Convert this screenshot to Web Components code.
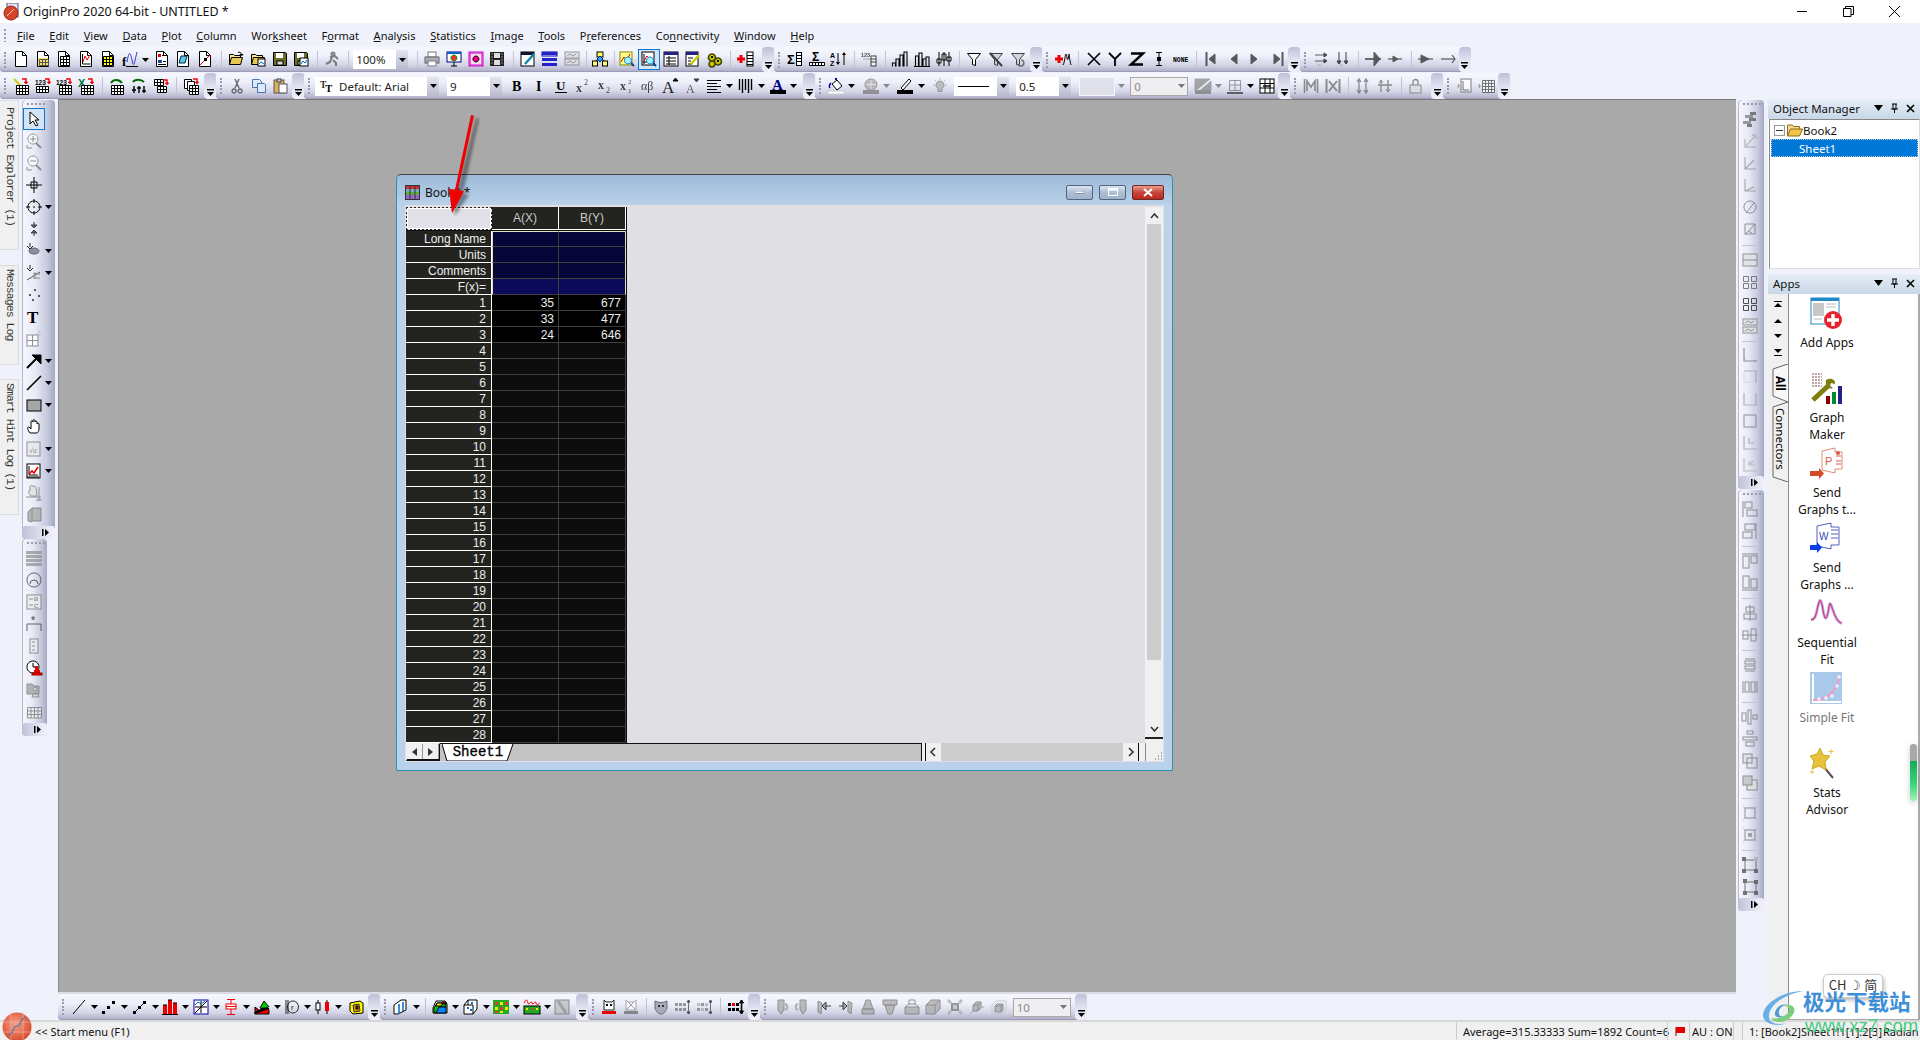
<!DOCTYPE html>
<html>
<head>
<meta charset="utf-8">
<title>OriginPro 2020</title>
<style>
    html, body { margin: 0; height: 100%; overflow: hidden; background: #eff2fb; }
</style>
</head>
<body>
<origin-app>
    <title-bar slot="title">OriginPro 2020 64-bit - UNTITLED *</title-bar>
    <menu-bar slot="menu"></menu-bar>

    <tool-row slot="bars">
        <tool-group w="774" items="new book wks gph ywk fx v rpt cyn crv | open open2 save save2 | run. | c~100%~55~n _3 | print pres mag film | nb lines grayc. |6 tree |6 cmag cmagsel tbl notep gear | addcol"></tool-group>
        <tool-group w="268" items="sig sigb az | n123. | bars3 bars2 hilo | filter filterx. filterr."></tool-group>
        <tool-group w="258" items="addpk | X Y Z I NONE | first. prev. next. last."></tool-group>
        <tool-group w="170" items="g1. g2. | g3. g4. | g5. g6."></tool-group>
    </tool-row>
    <tool-row slot="bars" second>
        <tool-group w="216" items="wand n1 n2 xl | gr1 gr2 gr3 | copyg"></tool-group>
        <tool-group w="88" items="cut. copy paste"></tool-group>
        <tool-group w="511" items="c~Default:_Arial~124~t _6 c~9~55~n _4 B I U sup. sub. sub2. ab. Aup Adn. al v wd v Ac v"></tool-group>
        <tool-group w="475" items="fill v _3 pat. v. _3 pen v _3 bulb. _2 c~LINE~55~l _5 c~0.5~55~n _6 c~~36~b v. _3 c~0~58~d _3 hatch. v. bord. v tgrid"></tool-group>
        <tool-group w="153" items="m1. m2. | m3. m4. | lock."></tool-group>
        <tool-group w="67" items="pl1. pl2."></tool-group>
    </tool-row>

    <left-dock slot="dock"></left-dock>

    <div slot="ltools" style="display:flex;flex-direction:column;align-items:flex-start">
        <tool-group vertical wpx="33" items="arrow zin. zout. cross target+ pts. maskc+ maskl+ dots. T scale. arrowd+ lined+ rectg+ hand sq.+ gphc+ handg. cube."></tool-group>
        <tool-group vertical wpx="25" items="hl. circ. abc. star. col. clock fold. tb."></tool-group>
    </div>

    <work-space slot="work">
        <sheet-window title-text="Book2 *"></sheet-window>
    </work-space>

    <div slot="bottom" style="display:flex;height:100%;--dw:8.700px">
        <tool-group w="322" items="bline v bsc v bls v bbar v bmat v bbox v barea v bcorr v bcan v _3 bmap"></tool-group>
        <tool-group w="208" items="b3d v | bc1 v bc2 v bh1 v bh2 v bgr."></tool-group>
        <tool-group w="172" items="dog dogd. | mask grd. grd2. | grdr"></tool-group>
        <tool-group w="327" items="s1. s2. s3. s4. s5. s6. s7. s8. s9. s10. s11. _2 c~10~58~d"></tool-group>
    </div>

    <div slot="rtools" style="display:flex;flex-direction:column;gap:1px">
        <tool-group vertical wpx="26" items="chk. ax1. ax2. ax3. wr. wr2. | fr1. fr2. fr3. fr4. |7 cr1. cr2. cr3. cr4. cr5. cr6."></tool-group>
        <tool-group vertical wpx="26" items="al1. al2. |8 al3. al4. |8 al5. al6. |8 al7. al8. |8 al9. al10. ov1. ov2. |8 ov3. ov4. |8 sz1. sz2."></tool-group>
    </div>

    <side-panel slot="panels" heading="Object Manager" style="height:170px">
        <tree-view></tree-view>
    </side-panel>
    <side-panel slot="panels" heading="Apps" style="height:746px;margin-top:5px">
        <apps-panel></apps-panel>
    </side-panel>

    <status-bar slot="status"></status-bar>
    <site-badge></site-badge>
</origin-app>

<script>
    // small svg drawing helpers for the toolbar glyphs
    const p = (d, f = 'none', s = '#000', w = 1) => `<path d="${d}" fill="${f}" stroke="${s}" stroke-width="${w}"/>`
    const r = (x, y, w, h, f, s = 'none') => `<rect x="${x}" y="${y}" width="${w}" height="${h}" fill="${f}" stroke="${s}"/>`
    const t = (x, y, s, z, f = '#000', b = 700, fam = 'Liberation Sans') =>
        `<text x="${x}" y="${y}" font-size="${z}" font-weight="${b}" fill="${f}" font-family="${fam}, sans-serif">${s}</text>`
    const doc = i => p('M2.5 .5h7l4 4v11h-11z', '#fff') + p('M9.5 .5v4h4') + i
    const grid = (x, y, n, m, c, f = '#fff', s = '#000') => {
        let d = ''
        for (let i = 0; i <= n; i++) d += `M${x + i * c + .5} ${y + .5}v${m * c}`
        for (let i = 0; i <= m; i++) d += `M${x + .5} ${y + i * c + .5}h${n * c}`
        return r(x + .5, y + .5, n * c, m * c, f) + p(d, 'none', s)
    }
    const redA = (x, y) => p(`M${x} ${y}h4v3`, 'none', '#e00', 1.4) + p(`M${x + 2} ${y + 3}h4l-2 2z`, '#e00', '#e00', .6)
    const folder = i => p('M1.5 13.5v-10h4l1 1h6v2', '#ffe680', '#000') + p('M1.5 13.5l2-7h11l-2 7z', '#e8c850', '#000') + i
    const floppy = i => p('M1.5 1.5h12l1 1v12h-13z', '#6d6d2e', '#000') + r(4, 2, 7, 5, '#fff') + r(5, 10, 6, 4, '#ddd', '#000') + i
    const dim = '#6a6f82'
    const gshape = d => p(d, '#a4a8b6', dim)
    const funnel = (x = '#fff') => p('M1.5 2.5h13l-5 6v6l-3-1v-5z', x, '#000')
    const frames = (c = dim) => p('M1.5 2.5h5v5h-5zM9.5 2.5h5v5h-5zM1.5 9.5h5v5h-5zM9.5 9.5h5v5h-5z', 'none', c)

    const ICONS = {
        new: doc(''),
        book: doc(r(3, 7, 10, 8, '#f6e06a') + grid(4, 8, 3, 2, 3, '#f6e06a', '#555')),
        wks: doc(grid(4, 5, 3, 3, 3)),
        gph: doc(p('M4.5 3v10h8') + p('M5 11l2-6 2 4 3-5', 'none', '#e00')),
        ywk: doc(grid(3, 5, 3, 3, 3, '#ff0')),
        fx: t(0, 15, 'f', 13, '#000', 700, 'Liberation Serif') + p('M5 11c2-11 3-11 5-2s2 4 5-8', 'none', '#33c') + p('M4 15.5h12'),
        rpt: doc(r(4, 3, 3, 3, '#e00') + r(4, 9, 4, 3, '#24a') + p('M8 4.5h3M9 10.5h3M4 13.5h8')),
        cyn: doc(p('M4 12l2-7h6l-2 7z', '#5ac8e8', '#024')),
        crv: doc(p('M3 14L13 4', 'none', '#e00') + r(7, 7, 3, 3, '#000')),
        open: folder(p('M10 1.5c2-1 3 0 3.5 2', 'none', '#000') + p('M12 3.5h3l-1.5 1.5z')),
        open2: folder(r(8, 8, 7, 7, '#fff', '#000') + p('M9 13l2-2 3 2', 'none', '#06c')),
        save: floppy(''),
        save2: floppy(r(7, 7, 8, 8, '#fff', '#000') + p('M8 13l2-3 2 2 2-3', 'none', '#06c')),
        run: p('M9 1.5a1.5 1.5 0 1 1 0 3 1.5 1.5 0 1 1 0-3zM6 6l5-1 3 3M8 6l-2 5-4 2M9 9l3 3v3', 'none', '#555', 2),
        print: r(4, 1, 8, 5, '#fff', '#777') + r(1, 6, 14, 6, '#aab', '#666') + r(4, 10, 8, 5, '#fff', '#777'),
        pres: r(1, 1, 14, 10, '#fff', '#008') + r(1, 1, 14, 2, '#06c') + p('M8 4a3 3 0 1 1-.1 0z', '#e33', '#090') + p('M8 11v4M5 15h6', 'none', '#000'),
        mag: r(1, 1, 14, 14, '#fde', '#c0c') + r(2, 2, 12, 12, 'none', '#c0c') + p('M8 5a3 3 0 1 1-.1 0z', '#e08', '#000'),
        film: r(1, 1, 14, 14, '#222') + r(5, 2, 6, 5, '#ddd') + r(5, 9, 6, 5, '#ddd') + p('M2.5 3h1M2.5 6h1M2.5 9h1M2.5 12h1M12.5 3h1M12.5 6h1M12.5 9h1M12.5 12h1', 'none', '#fff'),
        nb: r(1, 1, 13, 14, '#fff', '#000') + r(1, 1, 13, 3, '#113') + p('M5 13L14 3', 'none', '#18a', 2.5),
        lines: r(0, 1, 15, 4, '#fff', '#00a') + r(0, 1, 15, 3, '#22c') + r(0, 7, 15, 3, '#22c') + r(0, 12, 15, 3, '#22c'),
        grayc: r(1, 1, 14, 6, '#ddd', '#777') + r(1, 8, 14, 6, '#ddd', '#777') + p('M3 5l3-2 3 2 3-2M3 12l3-2 3 2 3-2', 'none', '#777'),
        tree: p('M8 5v3M3.5 10l4.5-3 4.5 3', 'none', '#000') + r(5, 1, 6, 5, '#ff6', '#000') + r(.5, 10, 5, 5, '#ff6', '#000') + r(10.5, 10, 5, 5, '#ff6', '#000') + p('M8 5l3 3-3 3-3-3z', '#39f', '#036'),
        cmag: r(1, 1, 12, 13, '#ff8', '#880') + p('M2 11l3-5 3 3 3-6', 'none', '#e00') + p('M9 6a3.5 3.5 0 1 1-.1 0z', '#aef', '#08c') + p('M12 12l3 3', 'none', '#049', 2),
        cmagsel: r(1, 1, 12, 13, '#fff', '#000') + p('M3 3v10M2 11h9', 'none', '#000') + p('M3 10l3-5 3 3', 'none', '#e00') + p('M9 6a3.5 3.5 0 1 1-.1 0z', '#aef', '#08c') + p('M12 12l3 3', 'none', '#049', 2),
        tbl: r(1, 1, 14, 14, '#fff', '#000') + r(1, 1, 14, 3, '#228') + p('M3 7h10M3 10h10M3 13h10M6 5v9', 'none', '#000'),
        notep: r(1, 1, 12, 14, '#fff', '#000') + r(1, 1, 12, 3, '#228') + p('M3 7h5M3 10h3M3 13h4') + p('M6 13L14 4', 'none', '#cc0', 2.5),
        gear: p('M5 3a3.5 3.5 0 1 1-.1 0zM11 7a3.5 3.5 0 1 1-.1 0zM5 10a3 3 0 1 1-.1 0z', '#cc0', '#440', 1.6) + r(4, 5, 2, 2, '#000') + r(10, 9, 2, 2, '#000'),
        addcol: p('M0 8h8M4 4v8', 'none', '#e00', 3) + r(10, 1, 6, 14, '#fff', '#000') + p('M10 4.5h6M10 7.5h6M10 10.5h6M10 13.5h6'),
        sig: t(0, 13, 'Σ', 13) + r(9.5, 1.5, 5, 13, '#fff', '#000') + p('M10 4.5h4M10 7.5h4M10 10.5h4'),
        sigb: t(3, 10, 'Σ', 12) + grid(0, 11, 5, 1, 3, '#fff'),
        az: t(0, 7, 'A', 7) + t(0, 15, 'Z', 7) + p('M8 2v11M14 14V3', 'none', '#000') + p('M6 11h4l-2 3zM12 4h4l-2-3z', '#000', 'none'),
        n123: t(0, 6, '123', 5.5) + p('M2 8h8', 'none', '#888') + r(10, 5, 5, 10, '#fff', '#000') + p('M10 8h5M10 11h5'),
        bars3: p('M.5 15.5V12h3v3.5M4 15.5V8h3v7.5M8 15.5V4h3v11.5M12 15.5V1h3v14.5', 'none', '#000', 1.1),
        bars2: p('M1.5 15V5h3v10M5 15V2h3v13M9 15V8h3v7M12 15V6h3v9M0 15.5h16', 'none', '#000', 1.1),
        hilo: p('M3 1v14M8 1v14M13 1v14M1 8h4v4H1zM6 3h4v6H6zM11 6h4v4h-4z', '#fff', '#000'),
        filter: funnel('#fff'),
        filterx: funnel('#ccd') + p('M2 2l12 13', 'none', '#000', 2),
        filterr: funnel('#ccd') + p('M11 9a3 3 0 1 1-3 4', 'none', '#060', 1.6),
        addpk: p('M0 8h8M4 4v8', 'none', '#e00', 3) + p('M8 14c2-3 2-11 3-11s1 8 2 5 1-5 1-5 1 8 2 11', 'none', '#000'),
        X: p('M2 2l12 12M14 2L2 14', 'none', '#000', 1.6),
        Y: p('M2 2l6 6 6-6M8 8v7', 'none', '#000', 1.8),
        Z: p('M2 2.5h12L2 13.5h12', 'none', '#000', 2.4),
        I: p('M5 1.5h6M5 14.5h6M8 2v12', 'none', '#000', 1) + r(6, 6, 4, 4, '#000'),
        NONE: t(0, 11, 'NONE', 6.4, '#000', 700, 'Liberation Mono'),
        first: p('M2.5 1v14', 'none', '#222', 2) + p('M11 3L5 8l6 5z', '#222', '#222'),
        prev: p('M12 3L6 8l6 5z', '#222', '#222'),
        next: p('M4 3l6 5-6 5z', '#222', '#222'),
        last: p('M13.5 1v14', 'none', '#222', 2) + p('M5 3l6 5-6 5z', '#222', '#222'),
        g1: p('M2 4h11M2 10h11', 'none', '#222', 1.2) + p('M11 2l3 2-3 2zM11 8l3 2-3 2z', '#222') + r(4, 13, 4, 2, '#bbb'),
        g2: p('M4 1v12M11 1v12', 'none', '#222', 1.2) + p('M2 10l2 3 2-3zM9 10l2 3 2-3z', '#222') + r(4, 13, 4, 2, '#bbb'),
        g3: p('M0 8h16', 'none', '#111', 1.6) + p('M9 1l6 7-6 7z', '#222', '#222'),
        g4: p('M1 8h14', 'none', '#222', 1.2) + p('M6 5l5 3-5 3z', '#222', '#222'),
        g5: p('M0 8h15', 'none', '#222', 1.2) + p('M3 4l8 4-8 4z', '#222', '#222'),
        g6: p('M1 8h14', 'none', '#222', 1.2) + p('M12 4l3 4-3 4', 'none', '#222', 1.2),
        wand: p('M1 1l6 6', 'none', '#cc0', 2) + grid(3, 7, 4, 3, 3) + redA(9, 1),
        n1: t(0, 7, '123', 6.5) + grid(1, 8, 4, 2, 3) + redA(10, 1),
        n2: t(0, 7, '123', 6.5) + grid(3, 7, 4, 3, 3) + redA(10, 1),
        xl: t(0, 9, 'X', 11, '#073') + grid(3, 7, 4, 3, 3) + redA(10, 1),
        gr1: p('M2 5c2-4 8-4 11 0', 'none', '#060', 2) + grid(2, 7, 4, 3, 3),
        gr2: p('M2 4c2-3 8-3 11 0', 'none', '#060', 2) + p('M3 8v7M8 8v7M13 8v7M1 12h4M6 10h4M11 13h4', 'none', '#000', 1.4),
        gr3: grid(1, 1, 3, 2, 3) + redA(10, 2) + grid(4, 8, 3, 2, 3),
        copyg: p('M1.5 1.5h7v9h-7z', '#fff') + p('M4.5 3.5h7v9h-7z', '#fff') + grid(6, 7, 3, 3, 3) + redA(10, 1),
        cut: p('M6 1l4 9M10 1L6 10M5 11a2 2 0 1 0 .1 0M11 11a2 2 0 1 0 .1 0', 'none', '#238', 1.4),
        copy: p('M1.5 1.5h7l2 2v6h-9z', '#dfe8ff', '#47a') + p('M6.5 5.5h7l1 1v8h-8z', '#dfe8ff', '#47a'),
        paste: r(2, 2, 10, 13, '#d8b060', '#654') + r(5, 1, 4, 3, '#ccc', '#444') + r(7, 6, 8, 9, '#fff', '#556'),
        B: t(2, 13, 'B', 14, '#000', 700, 'Liberation Serif'),
        I2: t(4, 13, 'I', 14, '#000', 700, 'Liberation Serif'),
        U: t(3, 12, 'U', 13, '#000', 700, 'Liberation Serif') + p('M2 14.5h12'),
        sup: t(1, 14, 'x', 12, '#000', 700, 'Liberation Serif') + t(9, 7, '2', 8, '#000', 400, 'Liberation Serif'),
        sub: t(1, 11, 'x', 12, '#000', 700, 'Liberation Serif') + t(9, 15, '2', 8, '#000', 400, 'Liberation Serif'),
        sub2: t(1, 12, 'x', 12, '#000', 700, 'Liberation Serif') + t(9, 6, '2', 7, '#000', 400, 'Liberation Serif') + t(9, 15, '1', 7, '#000', 400, 'Liberation Serif'),
        ab: t(0, 12, 'αβ', 12, '#000', 400, 'Liberation Serif'),
        Aup: t(0, 15, 'A', 17, '#222', 400, 'Liberation Serif') + p('M11 3l2.5-3 2.5 3z', '#000'),
        Adn: t(2, 15, 'A', 12, '#222', 400, 'Liberation Serif') + p('M10 1h5l-2.5 3z', '#000'),
        al: p('M1 2.5h14M1 5.5h10M1 8.5h14M1 11.5h10M1 14.5h14'),
        wd: p('M1.5 1v11M4.5 1v14M7.5 1v11M10.5 1v14M13.5 1v11', 'none', '#000', 1.4),
        Ac: t(2, 12, 'A', 15, '#008', 700, 'Liberation Serif') + r(0, 12, 16, 4, '#000'),
        fill: p('M4 6l5-4 5 6-5 4z', '#fff', '#000') + p('M8 2V0', 'none', '#00a', 2) + p('M3 5c-2 2-2 4-1 5', 'none', '#00a', 1.5) + r(0, 13, 16, 3, '#fff', '#ccc'),
        pat: p('M8 1a6 5.5 0 1 1-.1 0z', '#aaa', '#777') + p('M8 2v9M3 6.5h10', 'none', '#ddd') + r(0, 12, 16, 4, '#777'),
        pen: p('M4 10l8-9 2 2-8 9z', '#fff', '#000') + r(0, 12, 16, 4, '#000'),
        bulb: p('M8 3a4 4 0 0 1 2 7.5v3h-4v-3A4 4 0 0 1 8 3z', '#aab', '#778') + p('M8 0v2M1 7h2M13 7h2M3 2l1 1M13 2l-1 1', 'none', '#99a'),
        hatch: p('M0 1l15 0L0 13zM16 3v9l-10 0z', '#888', '#888') + r(0, 12, 16, 4, '#777'),
        bord: p('M2.5 2.5h11v10h-11z M8 2v10 M2 7h12', 'none', '#777', 1) + r(0, 14, 16, 2, '#333'),
        tgrid: r(1, 1, 14, 14, '#fff', '#000') + p('M1 5.5h14M1 10h14M6 1v14M11 1v14') + p('M4 8h8', 'none', '#000', 1.4),
        m1: p('M1.5 1v14M14.5 1v14M4 13V3l4 6 4-6v10', 'none', '#666', 1.6),
        m2: p('M1.5 1v14M14.5 1v14M4 3l8 10M12 3L4 13', 'none', '#666', 2),
        m3: p('M4 1v14M11 1v14M2 4l2-3 2 3M9 12l2 3 2-3M2 12l2 3 2-3M9 4l2-3 2 3', 'none', '#666', 1.3),
        m4: p('M4 2v12M11 2v12M1 7h14', 'none', '#666', 1.3) + p('M2 5l2-3 2 3M9 11l2 3 2-3', 'none', '#666'),
        lock: r(2, 7, 11, 8, '#ddd', '#666') + p('M5 7V4a2.5 2.5 0 0 1 5 0v3', 'none', '#666', 1.3),
        pl1: p('M1 8h3M2.5 6v4', 'none', '#888') + r(5, 1, 10, 13, '#fff', '#555') + p('M7 3v9h6', 'none', '#444'),
        pl2: p('M0 8h3M1.5 6v4', 'none', '#888') + grid(4, 2, 4, 4, 3, '#fff', '#444'),
        arrow: p('M4 1v12l3-3 3 5 2-1-3-5h4z', '#fff', '#000'),
        zin: p('M7 1a5 5 0 1 1-.1 0zM4 6h6M7 3v6', '#fff', dim) + p('M10 10l5 5', 'none', dim, 2) + p('M1 12v3h5', 'none', dim),
        zout: p('M7 1a5 5 0 1 1-.1 0zM4 6h6', '#fff', dim) + p('M10 10l5 5', 'none', dim, 2) + p('M1 12v3h5', 'none', dim),
        cross: p('M8 0v16M0 8h16') + p('M5 5h6v6H5z', 'none', '#000', 1),
        target: p('M8 2a6 6 0 1 1-.1 0zM8 0v4M8 12v4M0 8h4M12 8h4M7 8h2', 'none', '#000'),
        pts: p('M8 1v5M8 15v-5', 'none', '#333', 1.4) + p('M5 4l3 3 3-3zM5 12l3-3 3 3z', '#333'),
        maskc: p('M3 8a5 3 0 1 1 10 .1 5 3 0 1 1-10-.1z', '#8a8fa0', '#667') + p('M4 0v4M1 3l3 3 3-3', 'none', '#222'),
        maskl: p('M4 0v4M1 3l3 3 3-3', 'none', '#222') + p('M1 15L14 7', 'none', '#555') + p('M7 13h7M7 9h7M9 7v7', 'none', '#888'),
        dots: r(8, 2, 2, 2, '#223') + r(3, 7, 2, 2, '#223') + r(12, 8, 2, 2, '#223') + r(6, 12, 2, 2, '#223'),
        T: t(1, 14, 'T', 17, '#000', 700, 'Liberation Serif'),
        Tt: t(0, 10, 'T', 11, '#333', 700, 'Liberation Serif') + t(6, 15, 'T', 12, '#000', 700, 'Liberation Serif'),
        scale: r(1, 4, 11, 11, '#fff', dim) + p('M6.5 4v11M1 9.5h11', 'none', dim) + p('M12 0a2 2 0 0 1 2 2v2h-3V2', 'none', '#aaa'),
        arrowd: p('M1 15L13 3', 'none', '#000', 2) + p('M6 2h9v9z', '#000'),
        lined: p('M1 15L15 1', 'none', '#000', 1.6),
        rectg: r(1, 3, 14, 11, '#a6a6a6', '#000'),
        hand: p('M4 14c-3-4-3-6-1-6l2 2V3c0-2 2-2 2 0V2c0-2 2-2 2 0v1c0-1 2-1 2 0v2c1-1 2-1 2 0v5c0 2-1 3-2 4z', '#fff', '#000'),
        sq: r(1, 1, 13, 14, '#e6e8f2', dim) + t(3, 12, '√α', 7, dim, 400),
        gphc: r(1, 1, 13, 14, '#fff', '#000') + p('M3 3v9h9M1 14h12', 'none', '#000') + p('M3 11l3-3 2 2 4-6', 'none', '#e00', 1.6),
        handg: p('M5 11c-3-3-3-5-1-5V2c0-2 3-2 3 0 0-2 3-1 3 1l1 8zM0 12h15M13 2v14M10 15h6', '#dfe1ee', dim),
        cube: p('M6 1h9v13H6zM6 1L2 5v9l4 1', '#9ea2b2', '#667'),
        hl: r(0, 1, 16, 3, '#8d90a2') + r(0, 5, 16, 3, '#8d90a2') + r(0, 9, 16, 3, '#8d90a2') + r(0, 13, 16, 3, '#8d90a2'),
        circ: p('M8 1a7 7 0 1 1-.1 0zM4 12a4 4 0 1 1 8 0', 'none', '#333'),
        abc: r(1, 1, 14, 14, '#eef', dim) + t(8, 7, 'B', 6, dim) + t(8, 14, 'C', 6, dim) + p('M3 5h4M3 11h4', 'none', dim),
        star: p('M1 15V8h14v7', 'none', '#333') + t(5, 8, '*', 11, '#333'),
        col: r(4, 1, 8, 14, '#eef', dim) + p('M6 4h3M6 8h3M6 12h3', 'none', dim),
        clock: p('M7 1a6 6 0 1 1-.1 0zM7 3v4h3', '#fff', '#000') + r(8, 10, 6, 3, '#e00') + r(9, 6, 3, 4, '#e00') + r(6, 13, 10, 2, '#e00', '#900'),
        fold: p('M1 2h5l2 2h5v8H1z', '#9a9eb0', dim) + p('M9 9a2 2 0 1 1 .1 0M6 15h7l-1-3H7z', '#ccd', dim),
        tb: grid(1, 3, 4, 3, 3.5, '#eef', dim),
        bline: p('M2 15L14 1', 'none', '#000'),
        bsc: r(1, 12, 3, 3, '#000') + r(6, 7, 3, 3, '#000') + r(11, 2, 3, 3, '#000'),
        bls: p('M2 14L14 2', 'none', '#000') + r(1, 12, 3, 3, '#000') + r(6, 7, 3, 3, '#000') + r(11, 2, 3, 3, '#000'),
        bbar: r(1, 6, 4, 9, '#e00') + r(6, 1, 4, 14, '#e00') + r(11, 4, 4, 11, '#e00') + p('M0 15.5h16M1 6h4M6 1h4M11 4h4', 'none', '#000'),
        bmat: r(1, 1, 14, 14, '#fff', '#00a') + p('M2 14L14 2M8 2v12M2 8h12', 'none', '#000') + p('M2 6l3-3 3 2 4-3', 'none', '#06c'),
        bbox: p('M8 0v16M4 .5h8M4 15.5h8', 'none', '#e00') + r(3, 5, 10, 5, '#fff', '#e00') + p('M3 7.5h10', 'none', '#e00'),
        barea: p('M1 15V8l5 4 4-7 5 6v4z', '#e00') + p('M1 15V13l5-2 4-7 5 6', '#000') + p('M6 9l4-7 5 6', '#0c0'),
        bcorr: p('M2 1v14M4 1v14M9 2a5.5 6 0 1 1-.1 0z', 'none', '#222') + t(7, 11, 'r', 8, '#222', 400),
        bcan: p('M3 1v14M12 1v14', 'none', '#000') + r(1, 4, 4, 7, '#fff', '#000') + r(10, 3, 4, 9, '#e00'),
        bmap: p('M2 4l10-2 3 2v10l-10 1-3-3z', '#ff0', '#000') + p('M5 6l6-1 1 7-6 1z', '#c90', '#333') + p('M8 7h2v3H8z', '#e00'),
        b3d: p('M1 6l7-5h5v10l-8 4H1z', '#fff', '#000') + p('M6 15V5M10 12V3', 'none', '#06c', 1.5),
        bc1: p('M1 14V9l3-7h9l2 3v9z', '#fff', '#000') + p('M2 14V9l3-5h9v4H7l-3 6z', '#0c0') + p('M4 14l3-6h7v6z', '#08f') + p('M5 4h6l-2 3H4z', '#fd0') + p('M10 3h4v2h-4z', '#e00'),
        bc2: p('M1 6l4-5h9v9l-4 5H1z', '#fff', '#000') + r(8, 3, 2, 2, '#06c') + r(4, 8, 2, 2, '#06c') + r(7, 10, 2, 2, '#06c') + p('M5 1v5M1 6h9v9', 'none', '#000'),
        bh1: r(0, 1, 16, 14, '#2a2') + r(2, 3, 3, 3, '#e33') + r(7, 3, 3, 3, '#ee0') + r(12, 3, 3, 3, '#e33') + r(2, 8, 3, 3, '#ee0') + r(7, 8, 3, 3, '#e33') + r(12, 8, 3, 3, '#ee0') + r(2, 12, 3, 2, '#e33') + r(7, 12, 3, 2, '#ee0'),
        bh2: p('M0 4c2-4 3-4 4 0s3-4 4 0 3-4 4 0 3 0 4 0', 'none', '#e00') + r(0, 7, 16, 8, '#2a2', '#000') + r(2, 9, 2, 2, '#ee0') + r(7, 9, 2, 2, '#e33') + r(12, 9, 2, 2, '#ee0'),
        bgr: r(1, 1, 14, 14, '#bbb', '#666') + p('M4 2l8 12', 'none', '#888', 3),
        dog: p('M3 1l2 2h6l2-2v10H3z', '#fff', '#222') + r(5, 5, 2, 2, '#000') + r(9, 5, 2, 2, '#000') + r(1, 12, 14, 3, '#e00'),
        dogd: p('M3 1l2 2h6l2-2v10H3zM3 1l10 10M13 1L3 11', '#fff', '#888') + r(1, 12, 14, 3, '#666'),
        mask: p('M2 2c4 2 8 2 12 0v7c-1 4-4 6-6 6s-5-2-6-6z', '#aab', '#667') + r(5, 6, 2, 2, '#333') + r(9, 6, 2, 2, '#333'),
        grd: r(0, 4, 3, 3, '#777') + r(4, 4, 3, 3, '#777') + r(8, 4, 3, 3, '#777') + r(0, 9, 3, 3, '#777') + r(4, 9, 3, 3, '#777') + r(8, 9, 3, 3, '#777') + p('M13.5 1v14', 'none', '#444') + p('M12 3l1.5-2 1.5 2zM12 13l1.5 2 1.5-2z', '#444'),
        grd2: r(0, 4, 3, 3, '#aaa') + r(4, 4, 3, 3, '#777') + r(8, 4, 3, 3, '#aaa') + r(0, 9, 3, 3, '#777') + r(4, 9, 3, 3, '#aaa') + r(8, 9, 3, 3, '#777') + p('M13.5 1v14', 'none', '#444') + p('M12 3l1.5-2 1.5 2zM12 13l1.5 2 1.5-2z', '#444'),
        grdr: r(0, 4, 3, 3, '#000') + r(4, 4, 3, 3, '#e00') + r(8, 4, 3, 3, '#000') + r(0, 9, 3, 3, '#000') + r(4, 9, 3, 3, '#000') + r(8, 9, 3, 3, '#000') + p('M13.5 1v14', 'none', '#000', 1.6) + p('M11.5 4l2-3 2 3zM11.5 12l2 3 2-3z', '#000'),
        s1: gshape('M5 1h6v10l-3 4-3-4z') + p('M12 5c3 1 3 5 0 6', 'none', '#999', 2),
        s2: gshape('M5 1h6v10l-3 4-3-4z') + p('M3 5c-3 1-3 5 0 6', 'none', '#999', 2),
        s3: gshape('M2 2l4 2-1 11-3-2z') + p('M15 7H9', 'none', '#777', 2) + p('M10 3L6 7l4 4z', '#888'),
        s4: gshape('M10 2l4 2-1 11-3-2z') + p('M1 7h5', 'none', '#777', 2) + p('M5 3l4 4-4 4z', '#888'),
        s5: gshape('M6 1h4l3 9H3zM2 10h12v5H2z'),
        s6: gshape('M1 1h14v5H1zM3 6h10l-3 9H6z'),
        s7: gshape('M1 8h14v7H1z') + p('M5 1h6v4H5zM5 5L1 8M11 5l4 3', 'none', dim),
        s8: gshape('M1 6h9v9H1zM1 6l5-5h9v9l-5 5M10 6l5-5'),
        s9: p('M5 5h6v6H5z', '#bbc', '#777', 2) + p('M1 1l3 3M15 1l-3 3M1 15l3-3M15 15l-3-3', 'none', '#aab', 3),
        s10: gshape('M4 6l3-3h5v6l-3 3H4zM4 6h5v6M9 6l3-3') + p('M4 12l-3 3M12 8h3', 'none', '#999'),
        s11: p('M1 6l4-4h10v9l-4 4H1z', 'none', '#bbb') + gshape('M4 7l2-2h6v6l-2 2H4zM4 7h6v6M10 7l2-2'),
        chk: r(8, 1, 6, 3, '#555') + r(3, 4, 8, 3, '#778') + r(7, 7, 7, 3, '#555') + r(1, 10, 8, 3, '#778') + r(5, 13, 5, 3, '#555'),
        ax1: p('M3 14L13 3M3 6v8h11M10 2h4v4', 'none', '#aab', 1.3),
        ax2: p('M3 2v12h11M3 14L12 5', 'none', '#889', 1.1),
        ax3: p('M3 2v12h11M3 14l9-4', 'none', '#889', 1.1),
        wr: p('M8 2a6 6 0 1 1-.1 0zM4 14l8-10', 'none', dim),
        wr2: p('M3 3h10v10H3zM3 14L13 3M6 10l4 2', 'none', dim),
        fr1: r(1, 2, 14, 12, '#dfe1ee', dim) + p('M1 8h14', 'none', dim),
        fr2: frames('#555'),
        fr3: frames('#111'),
        fr4: r(1, 1, 14, 6, '#dde', '#778') + r(1, 9, 14, 6, '#dde', '#778') + p('M3 5l3-2 3 2 3-2M3 13l3-2 3 2 3-2', 'none', '#778'),
        cr1: p('M2 1v13h13', 'none', dim, 1.2) + p('M2 12h1M13 14v-1', 'none', dim),
        cr2: p('M2 2h12v12', 'none', '#99a', 1.2) + p('M2 4v9h10', 'none', '#ccd', 1),
        cr3: p('M2 2v12h12V2', 'none', '#99a', 1.2),
        cr4: r(2, 2, 12, 12, 'none', dim),
        cr5: p('M2 1v13h13M7 3v5h5', 'none', '#99a', 1.2),
        cr6: p('M2 1v13h13M7 4v4h5M7 8l4-4', 'none', '#aab', 1.2),
        al1: r(3, 1, 7, 6, 'none', dim) + r(5, 9, 10, 6, 'none', dim) + p('M1 0v16', 'none', dim),
        al2: r(3, 1, 10, 6, 'none', dim) + r(1, 9, 9, 6, 'none', dim) + p('M14 0v16', 'none', dim),
        al3: r(1, 3, 6, 12, 'none', dim) + r(9, 3, 6, 7, 'none', dim) + p('M0 1h16', 'none', dim),
        al4: r(1, 1, 6, 12, 'none', dim) + r(9, 4, 6, 9, 'none', dim) + p('M0 15h16', 'none', dim, 1),
        al5: r(4, 2, 8, 5, 'none', dim) + r(2, 9, 12, 5, 'none', dim) + p('M8 0v16', 'none', dim),
        al6: r(1, 4, 5, 8, 'none', dim) + r(9, 2, 5, 12, 'none', dim) + p('M0 8h16', 'none', dim),
        al7: p('M3 2h10M3 14h10', 'none', dim) + r(3, 4, 10, 3, 'none', dim) + r(3, 9, 10, 3, 'none', dim),
        al8: p('M1 2v12M15 2v12', 'none', dim) + r(3, 3, 4, 10, 'none', dim) + r(9, 3, 4, 10, 'none', dim),
        al9: r(0, 4, 4, 8, 'none', dim) + r(6, 1, 3, 14, 'none', dim) + r(11, 6, 4, 4, 'none', dim),
        al10: r(5, 0, 6, 3, 'none', dim) + r(1, 6, 14, 3, 'none', dim) + r(4, 11, 8, 4, 'none', dim),
        ov1: r(1, 1, 9, 9, '#dde', dim) + r(5, 5, 10, 10, 'none', dim),
        ov2: r(5, 5, 10, 10, '#dde', dim) + r(1, 1, 9, 9, '#bbc', dim),
        ov3: r(3, 3, 10, 10, 'none', dim) + p('M1 1l2 2M15 1l-2 2M1 15l2-2M15 15l-2-2', 'none', '#aab'),
        ov4: r(3, 3, 10, 10, 'none', dim) + p('M1 1l2 2M15 1l-2 2M1 15l2-2M15 15l-2-2', 'none', '#aab') + r(6, 6, 4, 4, '#889'),
        sz1: r(3, 3, 11, 10, 'none', '#445') + r(0, 0, 4, 4, '#445') + r(12, 12, 4, 4, '#445') + r(0, 12, 4, 4, '#445') + r(12, 0, 4, 4, '#aab'),
        sz2: r(3, 3, 11, 10, 'none', '#445') + r(1, 0, 4, 4, '#445') + r(12, 1, 4, 4, '#445') + r(1, 12, 4, 4, '#445') + r(12, 12, 4, 4, '#445'),
    }

    const svgIcon = (name, size = 16) =>
        `<svg width="${size}" height="${size}" viewBox="0 0 16 16" style="display:block;overflow:visible">${ICONS[name] || ''}</svg>`
    const DROP = '<svg width="7" height="4" viewBox="0 0 7 4" style="display:block"><path d="M0 0h7L3.5 4z" fill="#000"/></svg>'
    const UI = '"Noto Sans", "Open Sans", "Noto Sans CJK SC", sans-serif'

    class OriginApp extends HTMLElement {
        constructor() {
            super()
            this.attachShadow({ mode: 'open' }).innerHTML = `
            <style>
                :host { display: grid; width: 1920px; height: 1040px; position: relative; overflow: hidden;
                    grid-template-rows: 23px 24px 52px 921px 20px; background: #eff2fb; font-family: ${UI}; }
                .mid { display: grid; grid-template-columns: 22px 36px 1679px 31px 152px; min-height: 0; }
                .dock, .lt, .rt, .pn { min-height: 0; }
                .lt { padding-top: 1px; }
                .rt { padding: 1px 0 0 1px; }
                .center { display: grid; grid-template-rows: 893px 2px 26px; margin-right: 1px; }
                .rule { background: #dcdce6; margin-right: 0; }
                .bars { display: flex; flex-direction: column; gap: 1px; }
                .arrow { position: absolute; left: 440px; top: 110px; }
            </style>
            <slot name="title"></slot>
            <slot name="menu"></slot>
            <div class="bars"><slot name="bars"></slot></div>
            <div class="mid">
                <div class="dock"><slot name="dock"></slot></div>
                <div class="lt"><slot name="ltools"></slot></div>
                <div class="center"><slot name="work"></slot><div class="rule"></div><div><slot name="bottom"></slot></div></div>
                <div class="rt"><slot name="rtools"></slot></div>
                <div class="pn"><slot name="panels"></slot></div>
            </div>
            <slot name="status"></slot>
            <slot></slot>
            <svg class="arrow" width="50" height="110" viewBox="440 110 50 110">
                <defs><filter id="s" x="-40%" y="-10%" width="200%" height="120%"><feGaussianBlur stdDeviation="1.6"/></filter></defs>
                <path d="M473 116l3 1-16 74 6 2-14 21-4-25 6 1z" fill="#000" opacity=".38" transform="translate(3 2)" filter="url(#s)"/>
                <path d="M471 115l3 .8-16 74 6 1.4-12 22-3-24.500 6 1z" fill="#f00000"/>
            </svg>`
        }
    }

    class TitleBar extends HTMLElement {
        constructor() {
            super()
            this.attachShadow({ mode: 'open' }).innerHTML = `
            <style>
                :host { display: flex; align-items: center; background: #fff; height: 23px; font-size: 12.5px; color: #111; }
                .logo { margin: 0 4px 0 3px; }
                .txt { flex: 1; }
                .btn { width: 46px; display: flex; justify-content: center; }
            </style>
            <svg class="logo" width="16" height="18" viewBox="0 0 16 18">
                <rect x="4" y="0" width="11" height="14" fill="#dfe8f8" stroke="#557"/>
                <circle cx="8" cy="10" r="7" fill="#d8442a" stroke="#922"/>
                <path d="M4 13L11 6" stroke="#fcc" />
            </svg>
            <span class="txt"><slot></slot></span>
            <span class="btn"><svg width="11" height="11"><path d="M0 5.500h10" stroke="#000"/></svg></span>
            <span class="btn"><svg width="11" height="11"><path d="M.5 2.500h7.500v8H.5zM2.500 2.500V.5h8v8H8" fill="none" stroke="#000"/></svg></span>
            <span class="btn" style="margin-right:3px"><svg width="11" height="11"><path d="M0 0l11 11M11 0L0 11" stroke="#000"/></svg></span>`
        }
    }

    class MenuBar extends HTMLElement {
        constructor() {
            super()
            const items = ['<u>F</u>ile', '<u>E</u>dit', '<u>V</u>iew', '<u>D</u>ata', '<u>P</u>lot', '<u>C</u>olumn', 'Wor<u>k</u>sheet', 'F<u>o</u>rmat',
                '<u>A</u>nalysis', '<u>S</u>tatistics', '<u>I</u>mage', '<u>T</u>ools', 'P<u>r</u>eferences', 'Co<u>n</u>nectivity', '<u>W</u>indow', '<u>H</u>elp']
            this.attachShadow({ mode: 'open' }).innerHTML = `
            <style>
                :host { display: flex; align-items: center; height: 24px; background: #eff2fb; font-size: 11px; color: #111;
                    padding-left: 4px; box-sizing: border-box; }
                .grip { width: 2px; height: 13px; margin-right: 11px;
                    background: repeating-linear-gradient(#9a9aaa 0 2px, transparent 2px 4px); }
                .m { display: flex; gap: 14.700px; }
                u { text-underline-offset: 1px; }
            </style>
            <span class="grip"></span>
            <div class="m">${items.map(i => `<span>${i}</span>`).join('')}</div>`
        }
    }

    class ToolRow extends HTMLElement {
        constructor() {
            super()
            this.attachShadow({ mode: 'open' }).innerHTML = `
            <style>:host { display: flex; height: 25px; } :host([second]) { height: 26px; }</style><slot></slot>`
        }
    }

    class ToolGroup extends HTMLElement {
        constructor() {
            super()
            this.attachShadow({ mode: 'open' })
        }

        renderCombo(tok) {
            const [, rawText, w, kind] = tok.split('~')
            const text = rawText.replace(/_/g, ' ')
            if (kind == 'l') return `<span class="combo" style="width:${w}px"><i class="ln"></i><b class="dd">${DROP}</b></span>`
            if (kind == 'b') return `<span class="combo blank" style="width:${w}px"></span>`
            const pre = kind == 't' ? `<span class="tt">${svgIcon('Tt', 14)}</span>` : ''
            return `<span class="combo ${kind}" style="width:${w}px">${pre}<em>${text}</em><b class="dd">${DROP}</b></span>`
        }

        renderItem(tok) {
            if (tok == 'v' || tok == 'v.') return `<span class="drop ${tok == 'v.' ? 'off' : ''}">${DROP}</span>`
            if (tok[0] == '|') return `<span class="sep" style="--s:${tok.slice(1) || 9}px"></span>`
            if (tok[0] == '_') return `<span style="flex:none;width:${tok.slice(1)}px;height:1px"></span>`
            if (tok.startsWith('c~')) return this.renderCombo(tok)
            const withDrop = tok.endsWith('+')
            let name = withDrop ? tok.slice(0, -1) : tok
            const off = name.endsWith('.')
            if (off) name = name.slice(0, -1)
            if (name == 'I' && this.getAttribute('items').includes(' B I U')) name = 'I2'
            const cell = `<span class="ic ${off ? 'off' : ''} ${name == 'cmagsel' || name == 'arrow' ? 'sel' : ''}">${svgIcon(name)}</span>`
            return withDrop ? `<span class="pair">${cell}<span class="drop">${DROP}</span></span>` : cell
        }

        connectedCallback() {
            const vertical = this.hasAttribute('vertical')
            const items = this.getAttribute('items').trim().split(/\s+/).map(x => this.renderItem(x)).join('')
            const w = this.getAttribute('w')
            const wpx = this.getAttribute('wpx')
            this.shadowRoot.innerHTML = `
            <style>
                :host { display: flex; flex: none; box-sizing: border-box; font-family: ${UI};
                    width: ${w ? w + 'px' : 'auto'}; height: 100%; border-radius: 4px;
                    background: linear-gradient(#f6f7fe 0, #eef0fa 35%, #d4d5e6 72%, #aaaac4 100%);
                    box-shadow: inset 0 -1px 0 #9c9cb8; align-items: center; }
                :host([vertical]) { flex-direction: column; height: auto; width: ${wpx}px; align-items: flex-start;
                    background: linear-gradient(90deg, #f6f7fe 0, #e8eaf6 40%, #c8cade 75%, #a6a8c2 100%);
                    box-shadow: inset 1px 0 0 #b4b6cc; }
                .grip { flex: none; width: 2px; height: 16px; margin: 0 4px 0 4px;
                    background: repeating-linear-gradient(#9a9aaa 0 2px, transparent 2px 3.500px); }
                :host([vertical]) .grip { height: 2px; width: 20px; margin: 3px 0 3px 5px;
                    background: repeating-linear-gradient(90deg, #9a9aaa 0 2px, transparent 2px 4px); }
                .ic { flex: none; width: 21.800px; height: 21.800px; display: flex; align-items: center; justify-content: center; box-sizing: border-box; }
                :host([vertical]) .ic { width: 22px; height: 22px; margin-left: 1px; }
                .ic.off { opacity: .72; filter: grayscale(1); }
                .ic.sel { background: #d2e4f6; box-shadow: inset 0 0 0 1px #0a7ad1; }
                .pair { display: flex; align-items: center; }
                .drop { flex: none; width: var(--dw, 10px); height: 12px; display: flex; align-items: center; justify-content: center; }
                .pair .drop { margin-left: -2px; }
                .drop.off { opacity: .4; }
                .sep { flex: none; width: var(--s); height: 18px; position: relative; }
                .sep::after { content: ''; position: absolute; left: 50%; top: 0; bottom: 0; width: 1px; background: #c2c3d2; }
                :host([vertical]) .sep { height: var(--s); width: 26px; }
                :host([vertical]) .sep::after { left: 4px; right: 4px; width: auto; top: 50%; bottom: auto; height: 1px; }
                .combo { flex: none; height: 19px; background: #fff; display: flex; align-items: center; box-sizing: border-box;
                    font-size: 11.500px; color: #222; margin: 0 1px; position: relative; }
                .combo em { font-style: normal; flex: 1; padding-left: 3px; white-space: nowrap; overflow: hidden; }
                .combo .dd { flex: none; width: 12px; height: 100%; display: flex; align-items: center; justify-content: center;
                    background: linear-gradient(#e4e5ef, #b9bace); }
                .combo .ln { flex: 1; height: 1px; background: #000; margin: 0 8px 0 4px; }
                .combo.d { background: #efeff2; border: 1px solid #a8a8a8; color: #8a8a8a; }
                .combo.d .dd { background: none; opacity: .5; }
                .combo.blank { background: #dfe0ea; border: 1px solid #f6f6fb; }
                .tt { margin: 0 2px 0 5px; }
                .cap { flex: none; margin-left: auto; width: 12px; height: 100%; border-radius: 4px 3px 3px 4px;
                    background: linear-gradient(#bfc0d8, #dfe1f0 50%, #f0f1fa); display: flex; align-items: flex-end; justify-content: center; padding-bottom: 3px; box-sizing: border-box; }
                :host([vertical]) .cap { width: 100%; height: 13px; margin: auto 0 0; align-items: center; justify-content: flex-end; padding: 0 5px 0 0;
                    background: linear-gradient(90deg, #bfc0d8, #dfe1f0 60%, #f0f1fa); }
            </style>
            <span class="grip"></span>${items}
            <span class="cap">${vertical
                ? '<svg width="8" height="7"><path d="M0 0h1.500v7H0zM3 0l4 3.500L3 7z" fill="#000"/></svg>'
                : '<svg width="7" height="7"><path d="M0 0h7v1.500H0zM0 3h7L3.500 7z" fill="#000"/></svg>'}</span>`
        }
    }

    class LeftDock extends HTMLElement {
        constructor() {
            super()
            this.attachShadow({ mode: 'open' }).innerHTML = `
            <style>
                :host { display: flex; flex-direction: column; width: 19px; padding-top: 1px; }
                .t { width: 19px; box-sizing: border-box; background: #f0f0f0; border: 1px solid #dcdcdc; border-left: 0;
                    writing-mode: vertical-rl; font: 11.500px "Liberation Mono", monospace; letter-spacing: -.95px; color: #333; padding-top: 3px; line-height: 15px; white-space: nowrap; }
            </style>
            <div class="t" style="height:150px;padding-top:6px">Project Explorer (1)</div>
            <div class="t" style="height:100px;margin-top:15px">Messages Log</div>
            <div class="t" style="height:136px;margin-top:14px">Smart Hint Log (1)</div>`
        }
    }

    class WorkSpace extends HTMLElement {
        constructor() {
            super()
            this.attachShadow({ mode: 'open' }).innerHTML = `
            <style>
                :host { display: block; position: relative; background: #a9a9a9; border-top: 1px solid #7a7a7a; border-left: 1px solid #8a8a8a; box-sizing: border-box; }
            </style><slot></slot>`
        }
    }

    class SheetWindow extends HTMLElement {
        constructor() {
            super()
            this.attachShadow({ mode: 'open' })
        }

        connectedCallback() {
            const title = this.getAttribute('title-text')
            this.shadowRoot.innerHTML = `
            <style>
                :host { position: absolute; left: 337px; top: 74px; width: 777px; height: 597px; box-sizing: border-box;
                    display: flex; flex-direction: column; border: 1px solid #2c2c2c; border-color: #444 #2c90b8 #2c90b8 #2c90b8; border-radius: 5px 5px 2px 2px;
                    background: linear-gradient(#9dbad8 0, #bcd3ea 32px, #b9d1ea 100%); padding: 0 8px 8px 8px; font-family: "Liberation Sans", Arial, sans-serif; }
                .head { height: 30px; box-sizing: border-box; padding-top: 4px; flex: none; display: flex; align-items: center; gap: 5px; font: 12px ${UI}; color: #111; }
                .head .t { flex: 1; }
                .b { width: 27px; height: 15px; box-sizing: border-box; border: 1px solid #51657f; border-radius: 2px;
                    background: linear-gradient(#dce6f2, #aebfd4 50%, #9fb2c9); margin-right: 1px; display: flex; align-items: center; justify-content: center; }
                .b.x { width: 32px; background: linear-gradient(#eb9a8e, #c9453a 50%, #b9281f); border-color: #6f2a25; margin-right: 0; }
                .client { flex: 1; display: flex; flex-direction: column; background: #dfdfe4; min-height: 0; padding: 2px 1px 1px 1px; }
                .main { flex: 1; display: flex; min-height: 0; }
                .fill { flex: 1; background: #dfdfe4; }
            </style>
            <div class="head">
                <svg width="15" height="15" viewBox="0 0 15 15">
                    <rect x=".5" y=".5" width="14" height="14" fill="#fff" stroke="#333"/><rect x="1" y="1" width="13" height="3" fill="#c33"/>
                    <rect x="1" y="4" width="13" height="3" fill="#7ab"/><rect x="1" y="7" width="13" height="3" fill="#6a4"/><rect x="1" y="10" width="13" height="4" fill="#96c"/>
                    <path d="M5 1v13M10 1v13" stroke="#333"/>
                </svg>
                <span class="t">${title}</span>
                <span class="b"><svg width="9" height="3"><rect width="9" height="2.500" fill="#fff" stroke="#556" stroke-width=".6"/></svg></span>
                <span class="b"><svg width="10" height="8"><rect x=".5" y=".5" width="9" height="7" fill="none" stroke="#fff"/><rect x=".5" y=".5" width="9" height="2" fill="#fff"/></svg></span>
                <span class="b x"><svg width="10" height="9"><path d="M1 1l8 7M9 1L1 8" stroke="#fff" stroke-width="2"/></svg></span>
            </div>
            <div class="client">
                <div class="main">
                    <sheet-grid></sheet-grid>
                    <div class="fill"></div>
                    <v-scroll></v-scroll>
                </div>
                <sheet-tabs></sheet-tabs>
            </div>`
        }
    }

    class SheetGrid extends HTMLElement {
        constructor() {
            super()
            const labels = ['Long Name', 'Units', 'Comments', 'F(x)=']
            const data = [[35, 677], [33, 477], [24, 646]]
            let cells = ''
            labels.forEach((l, i) => {
                const cls = `lab ${i == 3 ? 'fx' : ''} ${i == 0 ? 'first' : ''}`
                cells += `<div class="h">${l}</div><div class="c ${cls} left">&nbsp;</div><div class="c ${cls} right">&nbsp;</div>`
            })
            for (let n = 1; n <= 29; n++) {
                const row = data[n - 1]
                cells += `<div class="h">${n < 29 ? n : ''}</div><div class="c ${row ? 'k' : ''}">${row ? row[0] : ''}</div><div class="c ${row ? 'k' : ''}">${row ? row[1] : ''}</div>`
            }
            this.attachShadow({ mode: 'open' }).innerHTML = `
            <style>
                :host { display: block; width: 221px; overflow: hidden; flex: none; font: 12px "Liberation Sans", Arial, sans-serif; background: #0c0c0c; }
                .g { display: grid; grid-template-columns: 86px 67px 67px; grid-auto-rows: 16px; }
                .corner { height: 23px; box-sizing: border-box; background: #e0e0e6; border: 2px dotted #222; outline: 1px solid #fff; outline-offset: -2px; }
                .top { height: 23px; box-sizing: border-box; background: #23241f; color: #c8c8c8; display: flex; align-items: center; justify-content: center; border-right: 1px solid #fff; border-bottom: 1px solid #fff; }
                .head { display: grid; grid-template-columns: 86px 67px 67px; height: 24px; background: #0c0c0c; }
                .h { background: #23241f; color: #eee; text-align: right; padding-right: 5px; border-bottom: 1px solid #fff; border-right: 1px solid #fff;
                    box-sizing: border-box; line-height: 16px; white-space: nowrap; }
                .c { background: #0c0c0c; color: #eee; text-align: right; padding-right: 4px; box-sizing: border-box; line-height: 16px;
                    border-right: 1px solid #3f3f3f; border-bottom: 1px solid #3f3f3f; }
                .c.k { background: #000; }
                .c.lab { background: #050538; }
                .c.fx { background: #0a0a58; }
                .c.first { border-top: 1px solid #e4e0c0; line-height: 14px; }
                .c.left { border-left: 1px solid #e4e0c0; }
                .c.right { border-right: 1px solid #e4e0c0; }
            </style>
            <div class="head"><div class="corner"></div><div class="top">A(X)</div><div class="top">B(Y)</div></div>
            <div class="g">${cells}</div>`
        }
    }

    class VScroll extends HTMLElement {
        constructor() {
            super()
            this.attachShadow({ mode: 'open' }).innerHTML = `
            <style>
                :host { display: flex; flex-direction: column; width: 18px; flex: none; background: #f0f0f0; align-items: center; }
                .a { height: 17px; flex: none; display: flex; align-items: center; justify-content: center; }
                .th { width: 14px; height: 436px; background: #cdcdcd; flex: none; }
                .sp { flex: 1; }
                .l { width: 18px; height: 2px; background: #222; flex: none; margin-bottom: 4px; }
            </style>
            <div class="a"><svg width="9" height="6"><path d="M1 5l3.500-4 3.500 4" fill="none" stroke="#333" stroke-width="1.600"/></svg></div>
            <div class="th"></div><div class="sp"></div>
            <div class="a"><svg width="9" height="6"><path d="M1 1l3.500 4 3.500-4" fill="none" stroke="#333" stroke-width="1.600"/></svg></div>
            <div class="l"></div>`
        }
    }

    class SheetTabs extends HTMLElement {
        constructor() {
            super()
            this.attachShadow({ mode: 'open' }).innerHTML = `
            <style>
                :host { display: flex; height: 18px; flex: none; background: #f0f0f0; }
                .nav { width: 34px; display: flex; box-sizing: border-box; border: 1px solid #eee; border-bottom: 2px solid #111; border-right: 1px solid #111; background: #f0f0f0; }
                .nav span { flex: 1; display: flex; align-items: center; justify-content: center; border-right: 1px solid #999; }
                .strip { width: 482px; display: flex; background: #c3c3c3; border-top: 1px solid #111; box-sizing: border-box; }
                .tab { margin-left: 2px; width: 72px; position: relative; font: 14px/16px "Liberation Mono", monospace; text-align: center; color: #000; -webkit-text-stroke: .3px #000; }
                .tab svg { position: absolute; left: 0; top: 0; }
                .tab span { position: relative; }
                .gap { width: 5px; background: #f0f0f0; border-left: 1px solid #111; border-right: 1px solid #111; box-sizing: border-box; }
                .h { width: 213px; display: flex; align-items: center; justify-content: space-between; padding: 0 3px; box-sizing: border-box; background: linear-gradient(90deg, #f0f0f0 15px, #cdcdcd 15px, #cdcdcd calc(100% - 15px), #f0f0f0 calc(100% - 15px)); }
                .b { width: 6px; border-left: 1px solid #111; background: #f0f0f0; }
                .rz { width: 18px; box-sizing: border-box; border-left: 1px solid #888; display: flex; align-items: flex-end; justify-content: flex-end; }
            </style>
            <div class="nav">
                <span><svg width="5" height="8"><path d="M5 0L0 4l5 4z" fill="#333"/></svg></span>
                <span><svg width="5" height="8"><path d="M0 0l5 4-5 4z" fill="#333"/></svg></span>
            </div>
            <div class="strip"><div class="tab">
                <svg width="72" height="17"><path d="M0 0l5 17h60l6-17" fill="#fff" stroke="#000"/></svg><span>Sheet1</span>
            </div></div>
            <div class="gap"></div>
            <div class="h">
                <svg width="7" height="10"><path d="M6 1L2 5l4 4" fill="none" stroke="#333" stroke-width="1.600"/></svg>
                <svg width="7" height="10"><path d="M1 1l4 4-4 4" fill="none" stroke="#333" stroke-width="1.600"/></svg>
            </div>
            <div class="b"></div>
            <div class="rz"><svg width="9" height="9"><path d="M7 1h1M4 4h1M7 4h1M1 7h1M4 7h1M7 7h1" stroke="#aaa" stroke-width="2"/></svg></div>`
        }
    }

    class SidePanel extends HTMLElement {
        constructor() {
            super()
            this.attachShadow({ mode: 'open' })
        }

        connectedCallback() {
            this.shadowRoot.innerHTML = `
            <style>
                :host { display: flex; flex-direction: column; width: 152px; box-sizing: border-box; }
                .head { height: 20px; flex: none; box-sizing: border-box; padding: 0 5px 2px; background: linear-gradient(#e6edf6, #c8d8e8); display: flex; align-items: center; font-size: 11.500px; color: #111; }
                .head span { flex: 1; }
                .head svg { margin-left: 7px; }
                .body { flex: 1; min-height: 0; background: #fff; }
            </style>
            <div class="head"><span>${this.getAttribute('heading')}</span>
                <svg width="9" height="6"><path d="M0 0h9L4.500 6z" fill="#000"/></svg>
                <svg width="9" height="10"><path d="M2 1h5M3 1v5h3V1M1 6h7M4.500 6v4" fill="none" stroke="#000"/></svg>
                <svg width="9" height="9"><path d="M1 1l7 7M8 1L1 8" stroke="#000" stroke-width="1.600"/></svg>
            </div>
            <div class="body"><slot></slot></div>`
        }
    }

    class TreeView extends HTMLElement {
        constructor() {
            super()
            this.attachShadow({ mode: 'open' }).innerHTML = `
            <style>
                :host { display: block; height: 100%; box-sizing: border-box; border: 1px solid #888; border-right-color: #ddd; border-bottom-color: #ddd; margin-left: 1px; font-size: 11.500px; color: #111; padding-top: 1px; }
                .r { height: 18px; display: flex; align-items: center; }
                .b { width: 9px; height: 9px; border: 1px solid #999; margin: 0 2px 0 4px; position: relative; background: #fff; }
                .b::after { content: ''; position: absolute; left: 1px; right: 1px; top: 4px; height: 1px; background: #333; }
                .sel { background: #0078d7; color: #fff; margin: 0 1px; outline: 1px dotted #bcd; outline-offset: -1px; padding-left: 28px; box-sizing: border-box; }
            </style>
            <div class="r"><span class="b"></span>
                <svg width="16" height="14" viewBox="0 0 16 14" style="margin-right:0"><path d="M.5 13V2h5l1 1.500h6V6" fill="#f5dc8c" stroke="#8a6a20"/><path d="M.5 13l3-7h12l-3 7z" fill="#f3c448" stroke="#8a6a20"/></svg>
                <span>Book2</span></div>
            <div class="r sel">Sheet1</div>`
        }
    }

    class AppItem extends HTMLElement {
        constructor() {
            super()
            this.attachShadow({ mode: 'open' }).innerHTML = `
            <style>
                :host { display: flex; flex-direction: column; align-items: center; height: 75px; text-align: center; font-size: 12px; line-height: 17px; color: #111; }
                :host([faded]) { color: #777; }
                ::slotted(svg) { display: block; height: 34px; margin-bottom: 3px; }
            </style>
            <slot name="icon"></slot><slot></slot>`
        }
    }

    class AppsPanel extends HTMLElement {
        constructor() {
            super()
            const apps = [
                ['Add Apps', `<rect x="1" y="1" width="28" height="26" fill="#fff" stroke="#1e88c8"/><rect x="1" y="1" width="28" height="3" fill="#1e88c8"/><rect x="3" y="6" width="11" height="13" fill="#c8c8c8"/><path d="M16 7h10M16 10h10M4 22h8M16 22h6" stroke="#bbb"/><circle cx="23" cy="23" r="9" fill="#e8212a"/><path d="M23 17v12M17 23h12" stroke="#fff" stroke-width="3.400"/>`],
                ['Graph<br>Maker', `<path d="M2 2h10M2 5h10M2 8h10M2 11h10M2 14h10" stroke="#a88" stroke-width="1.600" stroke-dasharray="2 1"/><path d="M3 28L19 13" stroke="#7d7d10" stroke-width="5"/><path d="M16 8c5-3 10 0 9 4l-4-1-1 3 3 2c-5 2-8-2-7-8z" fill="#7d7d10"/><rect x="16" y="24" width="4" height="8" fill="#800"/><rect x="22" y="20" width="4" height="12" fill="#083"/><rect x="28" y="14" width="4" height="18" fill="#228"/>`],
                ['Send<br>Graphs t...', `<path d="M12 4l13-3v4h7v17h-7v4l-13-3z" fill="#fff" stroke="#dc8c78"/><text x="15" y="18" font-size="11" fill="#d85b40" font-family="Liberation Sans">P</text><path d="M26 9h5M26 14h5M26 17h5" stroke="#d85b40"/><circle cx="28" cy="6" r="2" fill="#d85b40"/><rect x="0" y="24" width="9" height="5" fill="#d34a26"/><path d="M9 21l5 5.500-5 5.500z" fill="#d34a26"/>`],
                ['Send<br>Graphs ...', `<path d="M7 4l14-3v4h8v18h-8v4l-14-3z" fill="#fff" stroke="#5060c0"/><text x="9" y="18" font-size="10" fill="#334ab8" font-family="Liberation Sans">W</text><path d="M21 8h7M21 12h7M21 16h7" stroke="#5060c0"/><rect x="0" y="23" width="8" height="5" fill="#0b40e8"/><path d="M7 20l5 5.500-5 5.500z" fill="#0b40e8"/>`],
                ['Sequential<br>Fit', `<path d="M1 23c5-1 5-6 7-14s3-8 5 4 4 10 6-3 4 16 13 16" fill="none" stroke="#b8b4ee" stroke-width="3"/><path d="M1 23c5-1 5-6 7-14s3-8 5 4 4 10 6-3 4 16 13 16" fill="none" stroke="#d83a7a" stroke-width="1.200"/>`],
                ['Simple Fit', `<rect x="0" y="0" width="32" height="32" fill="#a9c9ea"/><path d="M3 2v28h28" stroke="#fff" stroke-width="2" fill="none"/><path d="M3 28c14 0 22-6 26-22" fill="none" stroke="#f19ac6" stroke-width="2"/><path d="M7 27h4M9 25v4M14 26h4M16 24v4M20 24h4M22 22v4M25 14h4M27 12v4M27 5h4M29 3v4" stroke="#fff"/>`],
                ['Stats<br>Advisor', `<path d="M14 20l9 11" stroke="#555" stroke-width="2"/><path d="M10 1l3 7 7 1-5 6 1 8-7-4-7 3 2-8-4-5 7-2z" fill="#e8c23c" stroke="#d0a820"/><path d="M21 2v5M18.500 4.500h5M2 23v4M0 25h4" stroke="#e8c23c"/>`]
            ]
            this.attachShadow({ mode: 'open' }).innerHTML = `
            <style>
                :host { display: flex; height: 100%; position: relative; }
                .strip { width: 21px; flex: none; background: #f0f0f0; border-right: 1px solid #888; box-sizing: border-box; display: flex; flex-direction: column; align-items: center; }
                .ar { height: 16px; display: flex; align-items: center; justify-content: center; }
                .tab { width: 16px; position: relative; margin-left: 4px; writing-mode: vertical-rl; font-size: 11.500px; display: flex; align-items: center; justify-content: center; line-height: 16px; letter-spacing: 0; }
                .tab svg { position: absolute; left: 0; top: 0; }
                .tab span { position: relative; }
                .tab.c { justify-content: flex-start; padding-top: 6px; box-sizing: border-box; }
                .list { flex: 1; display: flex; flex-direction: column; padding: 3px 53px 0 0; box-sizing: border-box; border-right: 2px solid #aaa; border-bottom: 1px solid #aaa; }
                .bar { position: absolute; right: 3px; top: 450px; width: 7px; height: 57px; border-radius: 3px; background: linear-gradient(#a8a8a8 0 17px, #19a858 17px, #38d67a 70%, #a8f0b8); box-shadow: 0 2px 6px rgba(0,0,0,.2); }
            </style>
            <div class="strip">
                <div class="ar" style="margin-top:2px"><svg width="8" height="7"><path d="M0 0h8v1H0zM0 6l4-4 4 4z" fill="#000"/></svg></div>
                <div class="ar"><svg width="8" height="5"><path d="M0 5l4-4 4 4z" fill="#000"/></svg></div>
                <div class="ar"><svg width="8" height="5"><path d="M0 0l4 4 4-4z" fill="#000"/></svg></div>
                <div class="ar"><svg width="8" height="7"><path d="M0 0l4 4 4-4zM0 6h8v1H0z" fill="#000"/></svg></div>
                <div class="tab" style="height:38px;margin-top:4px;font-weight:700"><svg width="16" height="38"><path d="M16 0L1 5v27l15 6" fill="#f7f7f7" stroke="#666"/></svg><span>All</span></div>
                <div class="tab c" style="height:80px;margin-top:0"><svg width="16" height="80"><path d="M16 0L1 5v70l15 5" fill="#f0f0f0" stroke="#666"/></svg><span>Connectors</span></div>
            </div>
            <div class="list">
                ${apps.map((a, i) => `<app-item ${i == 5 ? 'faded' : ''}><svg slot="icon" width="34" height="34" viewBox="0 0 34 34">${a[1]}</svg>${a[0]}</app-item>`).join('')}
            </div>
            <div class="bar"></div>`
        }
    }

    class StatusBar extends HTMLElement {
        constructor() {
            super()
            this.attachShadow({ mode: 'open' }).innerHTML = `
            <style>
                :host { display: flex; align-items: center; height: 20px; background: #f0f0f0; border-top: 2px solid #d8d8d8; box-sizing: border-box; font-size: 11px; color: #111; position: relative; white-space: nowrap; }
                .orb { position: absolute; left: 2px; top: -10px; }
                .s { padding-left: 35px; flex: 1; }
                .c { border-left: 1px solid #ccc; height: 100%; display: flex; align-items: center; box-sizing: border-box; padding-left: 6px; }
            </style>
            <svg class="orb" width="30" height="30" viewBox="0 0 30 30">
                <defs><radialGradient id="o" cx=".45" cy=".4" r=".7"><stop offset="0" stop-color="#f4a188"/><stop offset=".7" stop-color="#dd5a3e"/><stop offset="1" stop-color="#c53a24"/></radialGradient></defs>
                <circle cx="15" cy="15" r="14.500" fill="url(#o)"/>
                <path d="M9 0v30M21 0v30M0 10h30M0 20h30" stroke="#f6b9a8" stroke-width=".6"/>
                <path d="M7 23c4-2 5-10 8-9s3-6 8-9" fill="none" stroke="#2a70c0" stroke-width="1.400" stroke-dasharray="2 1"/>
            </svg>
            <span class="s">&lt;&lt; Start menu (F1)</span>
            <span class="c" style="width:211px">Average=315.33333 Sum=1892 Count=6</span>
            <span class="c" style="width:22px;padding-left:7px"><svg width="10" height="9"><path d="M1 0v9" stroke="#800"/><rect x="1" y="0" width="9" height="6" fill="#e60000"/></svg></span>
            <span class="c" style="width:44px;padding-left:2px">AU : ON</span>
            <span class="c" style="width:9px"></span>
            <span class="c" style="width:135px">1: [Book2]Sheet1!1[1]:2[3]</span>
            <span class="c" style="width:43px;padding-left:5px">Radian</span>`
        }
    }

    class SiteBadge extends HTMLElement {
        constructor() {
            super()
            this.attachShadow({ mode: 'open' }).innerHTML = `
            <style>
                :host { position: absolute; left: 1762px; top: 974px; width: 158px; height: 66px; font-family: "Noto Sans CJK SC", sans-serif; pointer-events: none; }
                .ime { position: absolute; left: 61px; top: 0; width: 60px; height: 24px; box-sizing: border-box; background: #fff; border: 1px solid #ccc; border-radius: 5px;
                    box-shadow: 1px 2px 4px rgba(0,0,0,.3); font-size: 13px; line-height: 20px; text-align: center; color: #333; white-space: nowrap; }
                .name { position: absolute; left: 41px; top: 15px; font-size: 21.500px; line-height: 23px; font-weight: 700; color: #3f8fd8; letter-spacing: 0; white-space: nowrap; }
                .url { position: absolute; left: 43px; top: 42px; font: 18.500px/19px "Liberation Sans", sans-serif; color: #45cc82; white-space: nowrap; }
                svg { position: absolute; left: 0; top: 16px; }
            </style>
            <div class="ime">CH ☽ 简</div>
            <svg width="44" height="40" viewBox="0 0 44 40">
                <path d="M41 1C22 1 3 12 1 24c-1 9 12 14 24 9-12 3-19-1-18-8C8 14 24 4 41 1z" fill="#6ab0e6"/>
                <path d="M9 28c2 4 9 5 14 3 6-3 11-8 9-13-1-3-6-4-10-2 4 0 6 2 5 5-1 4-10 9-18 7z" fill="#7ccf7a"/>
                <path d="M13 25c-1-6 6-12 12-10-5 0-9 4-8 9 0 2 3 3 6 2-4 2-9 2-10-1z" fill="#4f9bd8"/>
            </svg>
            <div class="name">极光下载站</div>
            <div class="url">www.xz7.com</div>`
        }
    }

    customElements.define('tool-row', ToolRow)
    customElements.define('tool-group', ToolGroup)
    customElements.define('title-bar', TitleBar)
    customElements.define('menu-bar', MenuBar)
    customElements.define('left-dock', LeftDock)
    customElements.define('work-space', WorkSpace)
    customElements.define('sheet-grid', SheetGrid)
    customElements.define('v-scroll', VScroll)
    customElements.define('sheet-tabs', SheetTabs)
    customElements.define('sheet-window', SheetWindow)
    customElements.define('side-panel', SidePanel)
    customElements.define('tree-view', TreeView)
    customElements.define('app-item', AppItem)
    customElements.define('apps-panel', AppsPanel)
    customElements.define('status-bar', StatusBar)
    customElements.define('site-badge', SiteBadge)
    customElements.define('origin-app', OriginApp)
</script>
</body>
</html>
